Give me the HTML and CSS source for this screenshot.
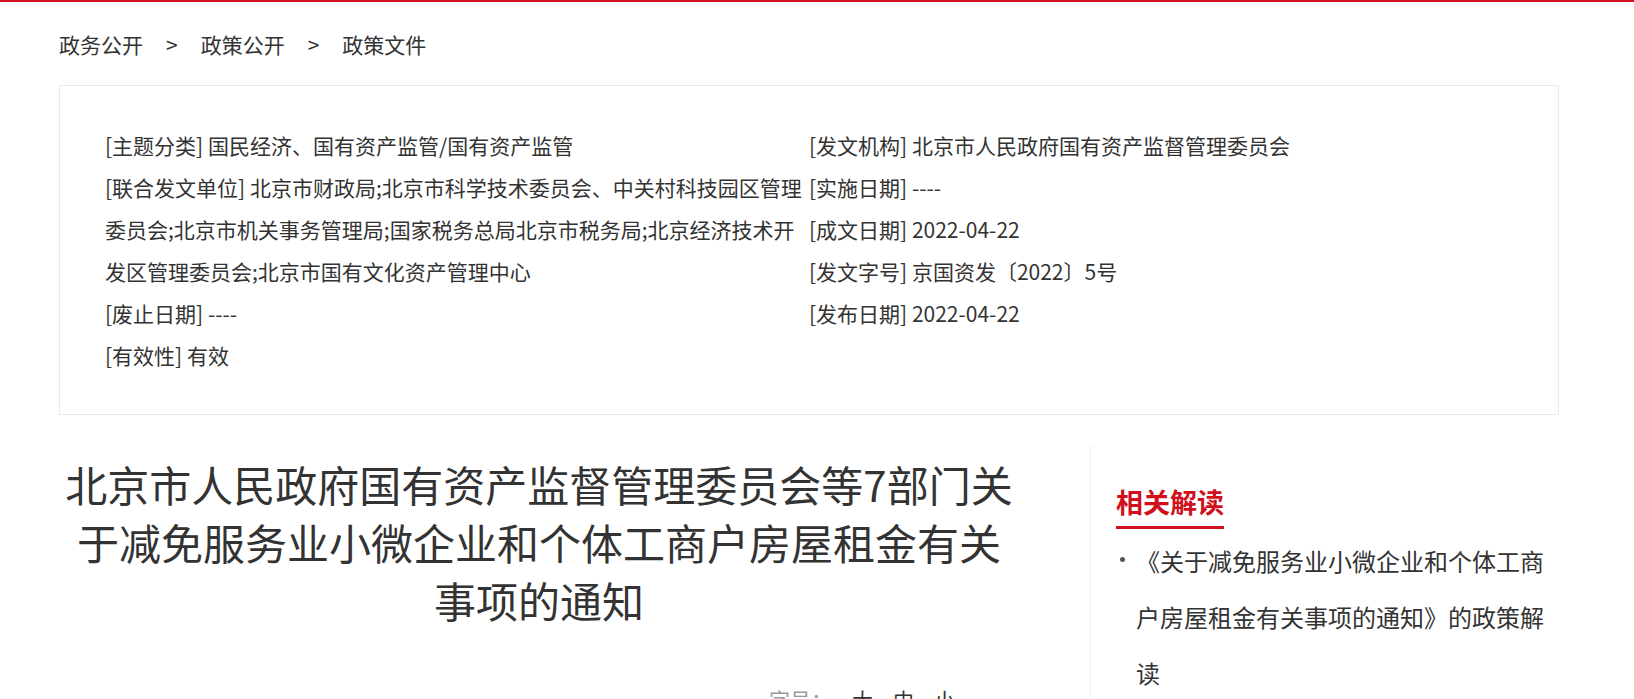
FILE: index.html
```html
<!DOCTYPE html>
<html lang="zh-CN">
<head>
    <meta charset="UTF-8">
    <meta name="viewport" content="width=device-width, initial-scale=1.0">
    <title>政策文件</title>
    <link rel="stylesheet" href="styles.css">
</head>
<body>
    <div class="topline"></div>
    <div class="wrap">
        <div class="crumb">
            <a href="#">政务公开</a><span class="sep">&gt;</span><a href="#">政策公开</a><span class="sep">&gt;</span><a href="#">政策文件</a>
        </div>

        <div class="info">
            <ul class="info-col">
                <li>[主题分类] 国民经济、国有资产监管/国有资产监管</li>
                <li>[联合发文单位] 北京市财政局;北京市科学技术委员会、中关村科技园区管理委员会;北京市机关事务管理局;国家税务总局北京市税务局;北京经济技术开发区管理委员会;北京市国有文化资产管理中心</li>
                <li>[废止日期] ----</li>
                <li>[有效性] 有效</li>
            </ul>
            <ul class="info-col">
                <li>[发文机构] 北京市人民政府国有资产监督管理委员会</li>
                <li>[实施日期] ----</li>
                <li>[成文日期] 2022-04-22</li>
                <li>[发文字号] 京国资发〔2022〕5号</li>
                <li>[发布日期] 2022-04-22</li>
            </ul>
        </div>

        <div class="content">
            <div class="main">
                <h1 class="title">北京市人民政府国有资产监督管理委员会等7部门关于减免服务业小微企业和个体工商户房屋租金有关事项的通知</h1>
                <div class="fontsize">
                    <span class="fs-label">字号：</span>
                    <a href="#">大</a>
                    <a href="#">中</a>
                    <a href="#">小</a>
                </div>
            </div>
            <div class="side">
                <h3>相关解读</h3>
                <ul class="side-list">
                    <li><a href="#">《关于减免服务业小微企业和个体工商户房屋租金有关事项的通知》的政策解读</a></li>
                </ul>
            </div>
        </div>
    </div>
</body>
</html>
```

FILE: styles.css
```css
body {
    margin: 0;
    font-family: "Noto Sans CJK SC", "Microsoft YaHei", sans-serif;
    color: #333;
    background-color: #fff;
}
a {
    color: #333;
    text-decoration: none;
}
ul {
    list-style: none;
    margin: 0;
    padding: 0;
}
.topline {
    height: 2px;
    background-color: #d1101c;
}
.wrap {
    margin-left: 59px;
    width: 1500px;
}
.crumb {
    padding-top: 27px;
    font-size: 21px;
    line-height: 30px;
    height: 30px;
}
.crumb .sep {
    margin: 0 23px;
}
.info {
    margin-top: 26px;
    border: 1px solid #ebebe3;
    padding: 38px 40px 38px 45px;
    display: grid;
    grid-template-columns: 704px 1fr;
    font-size: 21px;
    line-height: 42px;
}
.content {
    display: flex;
    margin-top: 30px;
}
.main {
    width: 960px;
}
.title {
    margin: 10px 0 0;
    font-size: 42px;
    line-height: 58px;
    font-weight: normal;
    text-align: center;
    color: #333;
}
.fontsize {
    display: flex;
    margin-top: 55px;
    padding-left: 710px;
    font-size: 21px;
    line-height: 30px;
}
.fs-label {
    color: #999;
}
.fontsize a {
    margin-left: 20px;
}
.side {
    margin-left: 71px;
    width: 442px;
    min-height: 300px;
    border-left: 1px solid #efefea;
    padding: 41px 0 0 25px;
}
.side h3 {
    width: fit-content;
    margin: 0;
    font-size: 27px;
    line-height: 32px;
    padding-bottom: 8px;
    border-bottom: 3px solid #d1101c;
    color: #d1101c;
    font-weight: bold;
}
.side-list {
    margin-top: 4px;
}
.side-list li {
    position: relative;
    padding-left: 20px;
    font-size: 24px;
    line-height: 56px;
}
.side-list li::before {
    content: "";
    position: absolute;
    left: 4px;
    top: 24px;
    width: 5px;
    height: 5px;
    border-radius: 50%;
    background-color: #555;
}
```
